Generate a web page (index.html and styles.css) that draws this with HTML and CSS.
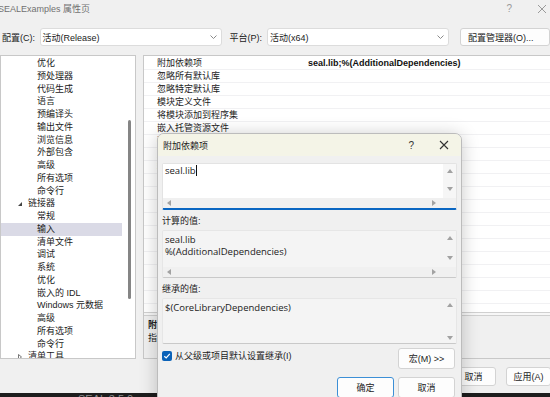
FILE: index.html
```html
<!DOCTYPE html>
<html lang="zh-CN">
<head>
    <meta charset="UTF-8">
    <title>SEALExamples 属性页</title>
    <link rel="stylesheet" href="styles.css">
</head>
<body>
    <div class="window">
        <div class="titlebar">
            <span class="title">SEALExamples 属性页</span>
            <span class="tb-help">?</span>
            <svg class="tb-close" width="10" height="10" viewBox="0 0 10 10"><path d="M1 1 9 9M9 1 1 9" stroke="#9a9a9a" stroke-width="1"/></svg>
        </div>

        <div class="config-row">
            <span class="cfg-label">配置(C):</span>
            <div class="select">
                <span>活动(Release)</span>
                <svg class="chev" width="7" height="4" viewBox="0 0 7 4"><path d="M0.5 0.5 3.5 3.5 6.5 0.5" fill="none" stroke="#8a8a8a"/></svg>
            </div>
            <span class="cfg-label plat">平台(P):</span>
            <div class="select">
                <span>活动(x64)</span>
                <svg class="chev" width="7" height="4" viewBox="0 0 7 4"><path d="M0.5 0.5 3.5 3.5 6.5 0.5" fill="none" stroke="#8a8a8a"/></svg>
            </div>
            <button class="btn cfg-mgr">配置管理器(O)...</button>
        </div>

        <div class="panels">
            <div class="tree">
                <ul class="tree-list">
                    <li>优化</li>
                    <li>预处理器</li>
                    <li>代码生成</li>
                    <li>语言</li>
                    <li>预编译头</li>
                    <li>输出文件</li>
                    <li>浏览信息</li>
                    <li>外部包含</li>
                    <li>高级</li>
                    <li>所有选项</li>
                    <li>命令行</li>
                    <li class="group open"><i class="arrow"></i>链接器</li>
                    <li>常规</li>
                    <li class="selected">输入</li>
                    <li>清单文件</li>
                    <li>调试</li>
                    <li>系统</li>
                    <li>优化</li>
                    <li>嵌入的 IDL</li>
                    <li>Windows 元数据</li>
                    <li>高级</li>
                    <li>所有选项</li>
                    <li>命令行</li>
                    <li class="group"><svg class="arrow-closed" width="4" height="6" viewBox="0 0 4 6"><path d="M0.5 0.5 3.5 3 0.5 5.5Z" fill="none" stroke="#555" stroke-width="0.8"/></svg>清单工具</li>
                </ul>
                <div class="vscroll"><div class="thumb"></div></div>
            </div>

            <div class="props">
                <div class="grid">
                    <div class="row"><span></span><span>附加依赖项</span><span class="val">seal.lib;%(AdditionalDependencies)</span></div>
                    <div class="row"><span></span><span>忽略所有默认库</span><span></span></div>
                    <div class="row"><span></span><span>忽略特定默认库</span><span></span></div>
                    <div class="row"><span></span><span>模块定义文件</span><span></span></div>
                    <div class="row"><span></span><span>将模块添加到程序集</span><span></span></div>
                    <div class="row"><span></span><span>嵌入托管资源文件</span><span></span></div>
                    <div class="row"><span></span><span>强制符号引用</span><span></span></div>
                    <div class="row"><span></span><span>延迟加载的 DLL</span><span></span></div>
                    <div class="row"><span></span><span>程序集链接资源</span><span></span></div>
                    <div class="row"><span></span><span></span><span></span></div>
                    <div class="row"><span></span><span></span><span></span></div>
                    <div class="row"><span></span><span></span><span></span></div>
                    <div class="row"><span></span><span></span><span></span></div>
                    <div class="row"><span></span><span></span><span></span></div>
                    <div class="row"><span></span><span></span><span></span></div>
                    <div class="row"><span></span><span></span><span></span></div>
                    <div class="row"><span></span><span></span><span></span></div>
                    <div class="row"><span></span><span></span><span></span></div>
                    <div class="row"><span></span><span></span><span></span></div>
                    <div class="row"><span></span><span></span><span></span></div>
                </div>
                <div class="splitter"></div>
                <div class="desc">
                    <b>附加依赖项</b>
                    <p>指定要添加到链接命令行的附加项。</p>
                </div>
            </div>
        </div>

        <div class="footer">
            <button class="btn">确定</button>
            <button class="btn">取消</button>
            <button class="btn">应用(A)</button>
        </div>
    </div>

    <div class="taskbar"><span>SEAL 3.5.0</span></div>

    <!-- dialog on top of the property page -->
    <div class="dialog">
        <div class="dlg-title">
            <span class="dlg-name">附加依赖项</span>
            <span class="dlg-help">?</span>
            <svg class="dlg-close" width="10" height="10" viewBox="0 0 10 10"><path d="M1 1 9 9M9 1 1 9" stroke="#333" stroke-width="1.1"/></svg>
        </div>
        <div class="dlg-body">
            <div class="box edit">
                <div class="box-text">seal.lib<span class="caret"></span></div>
                <div class="vbar"><i class="tri up"></i><i class="tri down"></i></div>
                <div class="hbar"><i class="tri left"></i><i class="tri right"></i></div>
                <div class="corner"></div>
            </div>

            <div class="dlg-label">计算的值:</div>
            <div class="box readonly">
                <div class="box-text">seal.lib<br>%(AdditionalDependencies)</div>
                <div class="vbar"><i class="tri up"></i><i class="tri down"></i></div>
                <div class="hbar"><i class="tri left"></i><i class="tri right"></i></div>
                <div class="corner"></div>
            </div>

            <div class="dlg-label">继承的值:</div>
            <div class="box readonly inherited">
                <div class="box-text">$(CoreLibraryDependencies)</div>
                <div class="vbar"><i class="tri up"></i><i class="tri down"></i></div>
            </div>

            <div class="inherit-row">
                <label class="check">
                    <span class="checkbox"><svg width="8" height="8" viewBox="0 0 8 8"><path d="M1.3 4.2 3.2 6 6.8 1.9" fill="none" stroke="#fff" stroke-width="1.2"/></svg></span>
                    从父级或项目默认设置继承(I)
                </label>
                <button class="btn dlg-btn">宏(M) &gt;&gt;</button>
            </div>

            <div class="dlg-actions">
                <button class="btn dlg-btn default">确定</button>
                <button class="btn dlg-btn">取消</button>
            </div>
        </div>
    </div>
</body>
</html>
```

FILE: styles.css
```css
body {
    margin: 0;
    width: 550px;
    height: 397px;
    overflow: hidden;
    position: relative;
    background: #f0f0f0;
    font-family: "Liberation Sans", "Noto Sans CJK SC", sans-serif;
    font-size: 9px;
    color: #1b1b1b;
}

ul {
    margin: 0;
    padding: 0;
    list-style: none;
}

.window {
    height: 393px;
    display: flex;
    flex-direction: column;
}

.titlebar {
    height: 17px;
    display: flex;
    align-items: center;
}
.title {
    margin-left: -2px;
    color: #707070;
    flex: 1;
}
.tb-help {
    color: #9a9a9a;
    margin-right: 25px;
    font-size: 10px;
}
.tb-close {
    margin-right: 3px;
}

.config-row {
    margin-top: 11px;
    height: 18px;
    display: flex;
    align-items: center;
}
.cfg-label {
    margin-left: 2px;
    width: 39px;
}
.cfg-label.plat {
    margin-left: 8px;
}
.select {
    width: 181px;
    height: 16px;
    background: #fff;
    border: 1px solid #dcdcdc;
    border-radius: 3px;
    display: flex;
    align-items: center;
    justify-content: space-between;
    padding: 0 4px 0 2px;
}

.btn {
    font: inherit;
    color: #1b1b1b;
    background: #fdfdfd;
    border: 1px solid #d3d3d3;
    border-radius: 3px;
    padding: 0;
}
.cfg-mgr {
    margin-left: 11px;
    width: 90px;
    height: 18px;
    flex-shrink: 0;
    text-align: left;
    padding-left: 7px;
}

.panels {
    margin-top: 9px;
    height: 304px;
    display: flex;
    gap: 7px;
}

.tree {
    width: 136px;
    flex-shrink: 0;
    box-sizing: border-box;
    background: #fff;
    border: 1px solid #c8c8c8;
    display: flex;
    overflow: hidden;
}
.tree-list {
    flex: 1;
    padding-top: 1px;
}
.tree-list li {
    height: 12.75px;
    line-height: 12.75px;
    padding-left: 36px;
    margin-right: 1px;
    white-space: nowrap;
}
.tree-list li.selected {
    background: #dadae6;
}
.tree-list li.group {
    padding-left: 17px;
    display: flex;
    align-items: center;
}
.arrow {
    width: 0;
    height: 0;
    margin-right: 6px;
    border-left: 4px solid transparent;
    border-bottom: 4px solid #444;
    margin-top: 1px;
}
.arrow-closed {
    margin-right: 6px;
}
.vscroll {
    width: 12px;
    display: flex;
    justify-content: center;
}
.thumb {
    width: 3px;
    height: 179px;
    margin-top: 64px;
    background: #858585;
    border-radius: 2px;
}

.props {
    flex: 1;
    margin-right: -10px;
    background: #fff;
    border: 1px solid #c8c8c8;
    display: flex;
    flex-direction: column;
    overflow: hidden;
}
.grid {
    height: 256px;
    overflow: hidden;
}
.row {
    height: 13px;
    line-height: 12px;
    display: grid;
    grid-template-columns: 13px 151px 1fr;
    border-bottom: 1px solid #f1f1f3;
    box-sizing: border-box;
    white-space: nowrap;
}
.row:first-child {
    margin-top: 1px;
}
.row .val {
    font-weight: bold;
    color: #111;
}
.splitter {
    height: 2px;
    border-top: 1px solid #d0d0d0;
    border-bottom: 1px solid #d0d0d0;
    background: #f7f7f7;
}
.desc {
    flex: 1;
    background: #f0f0f0;
    padding: 3px 4px;
    line-height: 13px;
}
.desc p {
    margin: 0;
}

.footer {
    margin-top: 8px;
    display: flex;
    justify-content: flex-end;
    gap: 10px;
    margin-right: -1px;
}
.footer .btn {
    width: 45px;
    height: 19px;
}

.taskbar {
    height: 10px;
    background: #1d1d1d;
    overflow: hidden;
    padding-left: 78px;
}
.taskbar span {
    display: block;
    color: #8c8c8c;
    font-size: 11px;
    line-height: 11px;
    margin-top: 1px;
}

.dialog {
    position: absolute;
    left: 157px;
    top: 133px;
    width: 303px;
    height: 290px;
    background: #f0f0f0;
    border: 1px solid #bcbcbc;
    border-radius: 7px 7px 0 0;
    box-shadow: 0 2px 18px rgba(0, 0, 0, 0.22);
    overflow: hidden;
}
.dlg-title {
    height: 22px;
    background: #f4f4e7;
    display: flex;
    align-items: center;
    padding-left: 5px;
}
.dlg-name {
    flex: 1;
}
.dlg-help {
    font-size: 10px;
    color: #333;
    margin-right: 25px;
}
.dlg-close {
    margin-right: 12px;
}

.dlg-body {
    padding: 7px 4px 0 4px;
    display: flex;
    flex-direction: column;
}
.box {
    display: grid;
    grid-template-columns: 1fr 13px;
    grid-template-rows: 34px 10px;
    border: 1px solid #e3e3e3;
    border-radius: 2px;
    font-family: "Open Sans", "Noto Sans CJK SC", sans-serif;
}
.box-text {
    padding: 2px 2px;
    line-height: 12px;
    font-size: 9.5px;
    color: #222;
}
.edit {
    border-bottom: 2px solid #0a66c2;
    height: 44px;
}
.edit .box-text {
    background: #fff;
    padding-top: 1px;
}
.caret {
    display: inline-block;
    width: 1px;
    height: 11px;
    background: #111;
    vertical-align: -2px;
}
.vbar {
    background: #f6f6f6;
    display: flex;
    flex-direction: column;
    justify-content: space-between;
    align-items: center;
    padding: 5px 0 7px;
}
.hbar {
    background: #f0f0f0;
    display: flex;
    justify-content: space-between;
    align-items: center;
    padding: 0 7px 0 4px;
}
.corner {
    background: #f0f0f0;
}
.tri {
    width: 0;
    height: 0;
}
.tri.up {
    border: 3px solid transparent;
    border-top: 0;
    border-bottom: 4px solid #a2a2a2;
}
.tri.down {
    border: 3px solid transparent;
    border-bottom: 0;
    border-top: 4px solid #a2a2a2;
}
.tri.left {
    border: 3px solid transparent;
    border-left: 0;
    border-right: 4px solid #a2a2a2;
}
.tri.right {
    border: 3px solid transparent;
    border-right: 0;
    border-left: 4px solid #a2a2a2;
}

.readonly {
    background: #f4f4f4;
    border-color: #e6e6e6;
    border-bottom: 1px solid #c9c9c9;
    grid-template-rows: 36px 10px;
}
.readonly .vbar {
    background: #f4f4f4;
}
.readonly .box-text {
    padding-top: 3px;
}
.inherited {
    grid-template-rows: 44px;
}
.inherited .vbar {
    padding: 4px 0 3px;
}

.dlg-label {
    margin-top: 3px;
    height: 16px;
    line-height: 16px;
}
.dlg-label + .box {
    margin-top: 1px;
}

.inherit-row {
    margin-top: 4px;
    display: flex;
    justify-content: space-between;
    align-items: flex-start;
}
.check {
    display: flex;
    align-items: center;
    gap: 3px;
    margin-top: 1px;
}
.checkbox {
    width: 10px;
    height: 10px;
    border-radius: 2px;
    background: #0a62b8;
    display: flex;
    align-items: center;
    justify-content: center;
}
.dlg-btn {
    width: 57px;
    height: 21px;
    margin-right: 2px;
}
.dlg-actions {
    margin-top: 8px;
    display: flex;
    justify-content: flex-end;
    gap: 4px;
}
.dlg-btn.default {
    border: 1px solid #3c8fd6;
    margin-right: 0;
}
```
